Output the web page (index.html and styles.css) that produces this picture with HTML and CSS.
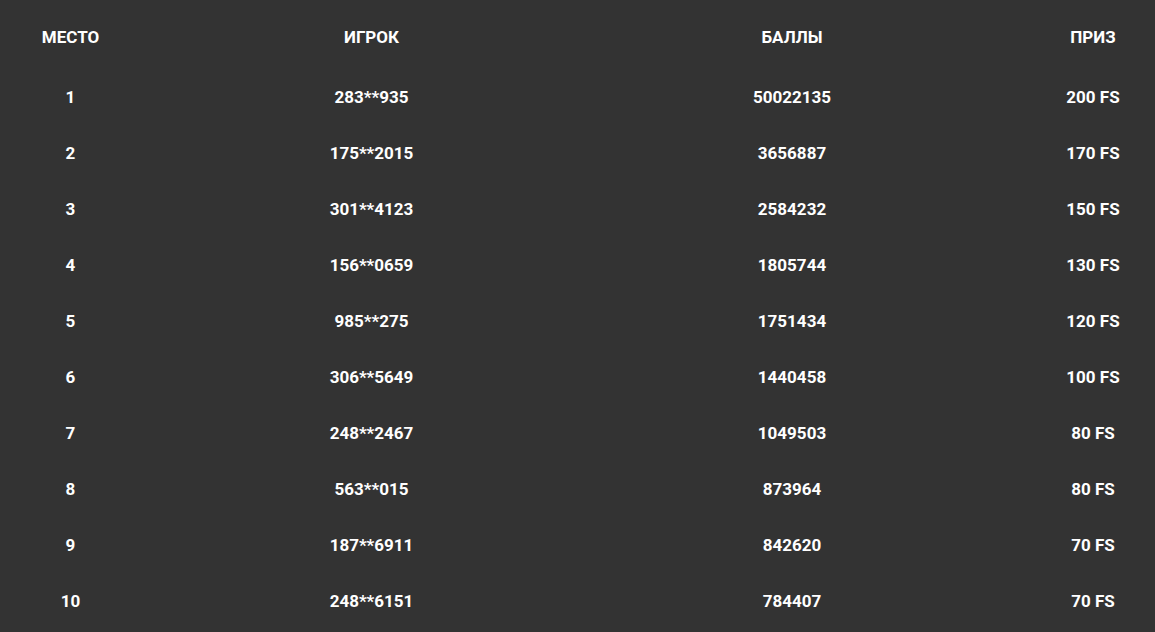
FILE: index.html
```html
<!DOCTYPE html>
<html lang="ru">
<head>
<meta charset="utf-8">
<title>Leaderboard</title>
<link rel="stylesheet" href="styles.css">
</head>
<body>
<div class="board">
  <div class="row head">
    <div class="c c1">МЕСТО</div><div class="c c2">ИГРОК</div><div class="c c3">БАЛЛЫ</div><div class="c c4">ПРИЗ</div>
  </div>
  <div class="row"><div class="c c1">1</div><div class="c c2">283**935</div><div class="c c3">50022135</div><div class="c c4">200 FS</div></div>
  <div class="row"><div class="c c1">2</div><div class="c c2">175**2015</div><div class="c c3">3656887</div><div class="c c4">170 FS</div></div>
  <div class="row"><div class="c c1">3</div><div class="c c2">301**4123</div><div class="c c3">2584232</div><div class="c c4">150 FS</div></div>
  <div class="row"><div class="c c1">4</div><div class="c c2">156**0659</div><div class="c c3">1805744</div><div class="c c4">130 FS</div></div>
  <div class="row"><div class="c c1">5</div><div class="c c2">985**275</div><div class="c c3">1751434</div><div class="c c4">120 FS</div></div>
  <div class="row"><div class="c c1">6</div><div class="c c2">306**5649</div><div class="c c3">1440458</div><div class="c c4">100 FS</div></div>
  <div class="row"><div class="c c1">7</div><div class="c c2">248**2467</div><div class="c c3">1049503</div><div class="c c4">80 FS</div></div>
  <div class="row"><div class="c c1">8</div><div class="c c2">563**015</div><div class="c c3">873964</div><div class="c c4">80 FS</div></div>
  <div class="row"><div class="c c1">9</div><div class="c c2">187**6911</div><div class="c c3">842620</div><div class="c c4">70 FS</div></div>
  <div class="row"><div class="c c1">10</div><div class="c c2">248**6151</div><div class="c c3">784407</div><div class="c c4">70 FS</div></div>
</div>
</body>
</html>
```
FILE: styles.css
```css
html, body {
  margin: 0;
  padding: 0;
  background: #333333;
}
body {
  height: 632px;
  overflow: hidden;
  font-family: Roboto, "Liberation Sans", Arial, sans-serif;
  font-weight: 700;
  font-size: 17px;
  color: #ffffff;
}
.board {
  display: flex;
  flex-direction: column;
}
.row {
  display: grid;
  grid-template-columns: 141px 461px 429px 1fr;
  line-height: 56px;
  height: 56px;
}
.head {
  padding-top: 9px;
  margin-bottom: 4px;
}
.c {
  text-align: center;
  white-space: nowrap;
}
.c3 {
  padding-right: 49px;
}
```
